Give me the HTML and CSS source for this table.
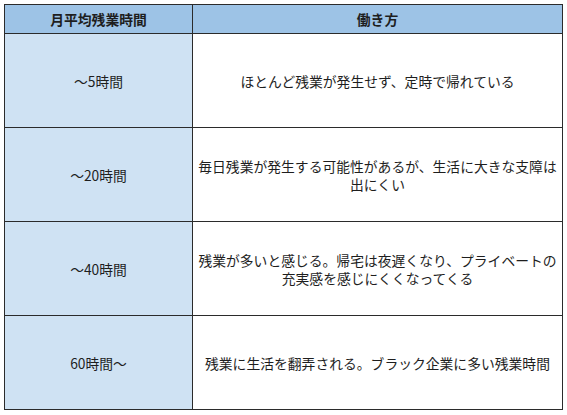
FILE: index.html
```html
<!DOCTYPE html>
<html lang="ja">
<head>
<meta charset="utf-8">
<link rel="stylesheet" href="styles.css">
</head>
<body>
<table class="grid">
  <colgroup><col class="c1"><col class="c2"></colgroup>
  <thead>
    <tr class="head"><th>月平均残業時間</th><th>働き方</th></tr>
  </thead>
  <tbody>
    <tr><td class="hours">～5時間</td><td class="desc">ほとんど残業が発生せず、定時で帰れている</td></tr>
    <tr><td class="hours">～20時間</td><td class="desc">毎日残業が発生する可能性があるが、生活に大きな支障は出にくい</td></tr>
    <tr><td class="hours">～40時間</td><td class="desc">残業が多いと感じる。帰宅は夜遅くなり、プライベートの充実感を感じにくくなってくる</td></tr>
    <tr><td class="hours">60時間～</td><td class="desc">残業に生活を翻弄される。ブラック企業に多い残業時間</td></tr>
  </tbody>
</table>
</body>
</html>
```
FILE: styles.css
```css
html, body {
  margin: 0;
  padding: 0;
  background: #ffffff;
}
body {
  padding: 4px;
  font-family: "Noto Sans CJK JP", "Noto Sans", sans-serif;
  font-size: 13.8px;
  color: #1e1e1e;
}
.grid {
  border-collapse: collapse;
  table-layout: fixed;
  width: 558px;
}
.c1 { width: 188px; }
.c2 { width: 370px; }
.grid th, .grid td {
  border: 1px solid #2b2b2b;
  text-align: center;
  vertical-align: middle;
  padding: 0 2px;
  line-height: 18px;
}
.head th {
  background: #9dc3e6;
  height: 28px;
  font-weight: bold;
}
.grid tbody tr {
  height: 94px;
}
.hours {
  background: #cfe2f3;
}
.desc {
  background: #ffffff;
}
```
